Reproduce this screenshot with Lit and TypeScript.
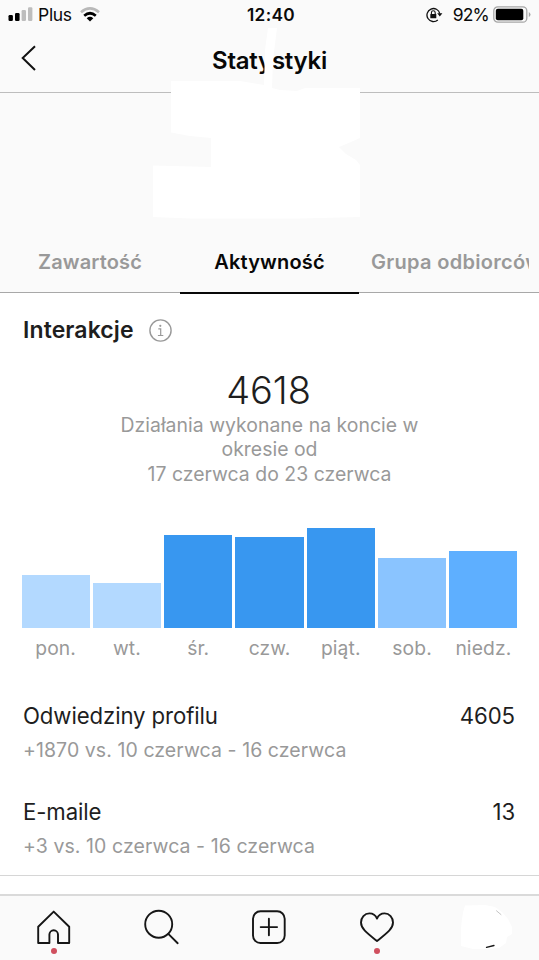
import { LitElement, html, css, svg } from "lit";
import { customElement } from "lit/decorators.js";

interface Day { label: string; height: number; color: string; }
interface Metric { name: string; value: string; change: string; }

const DAYS: Day[] = [
  { label: "pon.", height: 53, color: "#b3d9ff" },
  { label: "wt.", height: 45, color: "#b3d9ff" },
  { label: "śr.", height: 92.5, color: "#3897f0" },
  { label: "czw.", height: 91, color: "#3897f0" },
  { label: "piąt.", height: 99.5, color: "#3897f0" },
  { label: "sob.", height: 69.5, color: "#8ac4ff" },
  { label: "niedz.", height: 77, color: "#5eafff" },
];

const METRICS: Metric[] = [
  { name: "Odwiedziny profilu", value: "4605", change: "+1870 vs. 10 czerwca - 16 czerwca" },
  { name: "E-maile", value: "13", change: "+3 vs. 10 czerwca - 16 czerwca" },
];

@customElement("status-bar")
export class StatusBar extends LitElement {
  static styles = css`
    :host { display: grid; grid-template-columns: 1fr auto 1fr; align-items: center; height: 30px; padding: 0 8px 0 8px; color: #0a0a0a; font-size: 17.5px; }
    .left, .right { display: flex; align-items: center; }
    .right { justify-content: flex-end; }
    .carrier { margin: -1px 8px 0 5px; letter-spacing: -0.3px; }
    .time { font-weight: 600; letter-spacing: 0.3px; font-size: 17.3px; margin: -2px 0 0 3px; }
    .percent { margin: -1px 4px 0 10px; letter-spacing: -0.8px; }
    svg { display: block; flex: none; }
    .left svg, .right svg { margin-top: -1px; }
  `;
  render() {
    return html`
      <div class="left">
        <svg width="25" height="15" viewBox="0 0 25 15">
          <rect x="0.5" y="8" width="4.4" height="6" rx="1.2" fill="#000" />
          <rect x="7" y="6" width="4.6" height="8" rx="1.2" fill="#000" />
          <rect x="13.6" y="3" width="4.4" height="11" rx="1.2" fill="#bdbdbd" />
          <rect x="20" y="0.3" width="4.4" height="13.7" rx="1.2" fill="#bdbdbd" />
        </svg>
        <span class="carrier">Plus</span>
        <svg width="20" height="15" viewBox="0 0 20 15">
          <path d="M1 5.2 Q10 -2.3 19 5.2" fill="none" stroke="#b8b8b8" stroke-width="2.7" />
          <path d="M4.2 8.7 Q10 3.8 15.8 8.7" fill="none" stroke="#000" stroke-width="2.7" />
          <path d="M6.7 11.2 Q10 8.4 13.3 11.2 L10 14.5 Z" fill="#000" />
        </svg>
      </div>
      <span class="time">12:40</span>
      <div class="right">
        <svg width="17" height="16" viewBox="0 0 17 16">
          <path d="M11.8 12.9 A6.5 6.5 0 1 1 13.8 6.6" fill="none" stroke="#111" stroke-width="1.3" />
          <path d="M11.2 6.3 H16.4 L13.8 9.5 Z" fill="#111" />
          <rect x="4.3" y="6.9" width="6" height="4.4" rx="0.5" fill="#111" />
          <path d="M5.4 7 V5.7 A1.9 1.9 0 0 1 9.2 5.7 V7" fill="none" stroke="#111" stroke-width="1.1" />
        </svg>
        <span class="percent">92%</span>
        <svg width="38" height="17" viewBox="0 0 38 17">
          <rect x="0.8" y="0.8" width="33" height="15.4" rx="4" fill="none" stroke="#a6a6a6" stroke-width="1.3" />
          <rect x="2.8" y="2.8" width="27.5" height="11.4" rx="2" fill="#000" />
          <path d="M35.8 6 V11 Q37.5 10 37.5 8.5 Q37.5 7 35.8 6" fill="#a6a6a6" />
        </svg>
      </div>`;
  }
}

@customElement("week-chart")
export class WeekChart extends LitElement {
  static styles = css`
    :host { display: grid; grid-template-columns: repeat(7, 1fr); column-gap: 3px; padding: 0 21.5px; }
    .day { display: flex; flex-direction: column; justify-content: flex-end; height: 136px; text-align: center; }
    .label { height: 36px; padding-top: 7px; box-sizing: border-box; line-height: 27px; font-size: 19.3px; color: #999; letter-spacing: 0.1px; white-space: nowrap; }
  `;
  render() {
    return DAYS.map((d) => html`
      <div class="day">
        <div style="height:${d.height}px;background:${d.color}"></div>
        <div class="label">${d.label}</div>
      </div>`);
  }
}

@customElement("tab-bar")
export class TabBar extends LitElement {
  static styles = css`
    :host { display: grid; grid-template-columns: repeat(5, 1fr); height: 64px; border-top: 2px solid #dadada; background: #fafafa; box-sizing: content-box; }
    .item { position: relative; display: flex; justify-content: center; padding-top: 12px; }
    .dot { position: absolute; top: 52px; left: 50%; width: 6px; height: 6px; margin-left: -3px; border-radius: 50%; background: #d0505f; }
    svg { display: block; overflow: visible; }
  `;
  private icon(shape: unknown, dot = false) {
    return html`<div class="item">
      <svg width="40" height="40" viewBox="0 0 40 40" fill="none" stroke="#161616" stroke-width="1.9" stroke-linejoin="round" stroke-linecap="round">${shape}</svg>
      ${dot ? html`<span class="dot"></span>` : ""}
    </div>`;
  }
  render() {
    return html`
      ${this.icon(svg`<path d="M4.200 35 V18.800 L19.700 3.600 L35.200 18.800 V35 H24 V26.600 A4.300 4.300 0 0 0 15.400 26.600 V35 Z" />`, true)}
      ${this.icon(svg`<circle cx="16.700" cy="16.200" r="13.500" /><path d="M26.300 25.900 L35.700 35.200" />`)}
      ${this.icon(svg`<rect x="4" y="3.300" width="31.700" height="31.700" rx="7.500" /><path d="M19.900 10.800 V27.200 M11.700 19.100 H28.100" />`)}
      ${this.icon(svg`<path d="M20 33 C16.500 30.200 11.500 26.400 7.800 22.600 C4.800 19.500 4 17 4 14.500 C4 9.500 7.600 5.400 12.400 5.400 C15.800 5.400 18.600 7.200 20 10.600 C21.400 7.200 24.200 5.400 27.600 5.400 C32.400 5.400 36 9.500 36 14.500 C36 17 35.200 19.500 32.200 22.600 C28.500 26.400 23.500 30.200 20 33 Z" />`, true)}
      ${this.icon(svg`
        <path d="M0 -2.500 L20 -3 L30 -1 L37 4 L43 11 L47 19 L47 26 L42 29 L41 35 L34 40 L22 41 L8 41 L-4 38 Q-5 12 0 -2.500 Z" fill="#fff" stroke="none" />
        <path d="M31.500 2.800 L36 6.600" stroke="#aaa" stroke-width="0.700" />
        <path d="M21.500 39.300 L29 37.500" stroke-width="1.300" />`)}`;
  }
}

@customElement("app-root")
export class AppRoot extends LitElement {
  static styles = css`
    :host { display: flex; flex-direction: column; width: 539px; height: 960px; overflow: hidden; position: relative; background: #fff; font-family: Inter, "Liberation Sans", sans-serif; color: #1e1e1e; font-kerning: normal; }
    .top { background: #fafafa; height: 292px; flex: none; border-bottom: 1px solid #a8a8a8; display: flex; flex-direction: column; }
    .nav { height: 62px; flex: none; border-bottom: 1px solid #bdbdbd; display: grid; grid-template-columns: 1fr auto 1fr; align-items: center; }
    .back { margin: -6px 0 0 21px; display: block; }
    .title { font-size: 24px; font-weight: 600; color: #080808; letter-spacing: -0.25px; margin-top: -2px; }
    .mask { position: absolute; left: 150px; top: 25px; display: block; }
    .tabs { margin-top: auto; display: grid; grid-template-columns: 180px 179px 180px; height: 61px; margin-bottom: -1px; font-size: 20px; font-weight: 600; line-height: 60px; text-align: center; color: #999; white-space: nowrap; letter-spacing: 0.15px; }
    .active { color: #080808; border-bottom: 2px solid #080808; box-sizing: border-box; z-index: 1; }
    .clipped { text-align: left; margin: 0 10px 0 12px; overflow: hidden; letter-spacing: 0.3px; }
    .heading { display: flex; align-items: center; gap: 15px; padding: 18px 23px 0; height: 38px; font-size: 23px; line-height: 38px; font-weight: 600; letter-spacing: 0.1px; }
    .heading svg { margin-top: 1px; }
    .total { margin-top: 19px; height: 44px; line-height: 44px; text-align: center; font-size: 38px; font-weight: 300; letter-spacing: -0.1px; padding-right: 2px; }
    .caption { text-align: center; font-size: 19.4px; line-height: 24.3px; color: #999; margin-top: 1px; letter-spacing: 0.03px; }
    .chart { margin-top: 42px; }
    .metrics { padding: 0 24px 0 23px; margin-top: 35px; display: flex; flex-direction: column; gap: 32px; }
    .metric { height: 64px; }
    .line { display: flex; justify-content: space-between; font-size: 22.2px; line-height: 33px; letter-spacing: -0.1px; }
    .change { font-size: 19.5px; line-height: 26px; margin-top: 5px; color: #999; letter-spacing: 0.07px; }
    .rule { height: 1px; background: #d6d6d6; margin-top: 16px; flex: none; }
    .bottom { margin-top: auto; }
  `;
  render() {
    return html`
      <div class="top">
        <status-bar></status-bar>
        <div class="nav">
          <svg class="back" width="16" height="26" viewBox="0 0 16 26"><path d="M14 1.2 L1.7 13 L14 25" fill="none" stroke="#111" stroke-width="2" /></svg>
          <span class="title">Statystyki</span>
        </div>
        <svg class="mask" width="211" height="194" viewBox="150 25 211 194">
          <path fill="#fff" d="M171 81 H240 L264 85 L265 50 L268 28 H277 L273 60 L272 88 L280 90 L297 91 L305 88 H360 V138 L351 142 L339 147 L346 154 L356 160 L360 165 V217 L300 218.5 H190 L153 217 V165.500 L211 167 V138 L190 136 L171 132.500 Z" />
        </svg>
        <div class="tabs">
          <div>Zawartość</div>
          <div class="active">Aktywność</div>
          <div class="clipped">Grupa odbiorców</div>
        </div>
      </div>
      <div class="heading">
        <span>Interakcje</span>
        <svg width="23" height="23" viewBox="0 0 23 23" fill="none" stroke="#999">
          <circle cx="11.500" cy="11.500" r="10.600" stroke-width="1.400" />
          <circle cx="11.300" cy="6.800" r="1.100" fill="#999" stroke="none" />
          <path d="M9.300 9.900 H11.700 V16.400 M8.900 16.500 H14.300" stroke-width="1.200" />
        </svg>
      </div>
      <div class="total">4618</div>
      <div class="caption">Działania wykonane na koncie w<br />okresie od<br />17 czerwca do 23 czerwca</div>
      <week-chart class="chart"></week-chart>
      <div class="metrics">
        ${METRICS.map((m) => html`
          <div class="metric">
            <div class="line"><span>${m.name}</span><span>${m.value}</span></div>
            <div class="change">${m.change}</div>
          </div>`)}
      </div>
      <div class="rule"></div>
      <tab-bar class="bottom"></tab-bar>`;
  }
}
